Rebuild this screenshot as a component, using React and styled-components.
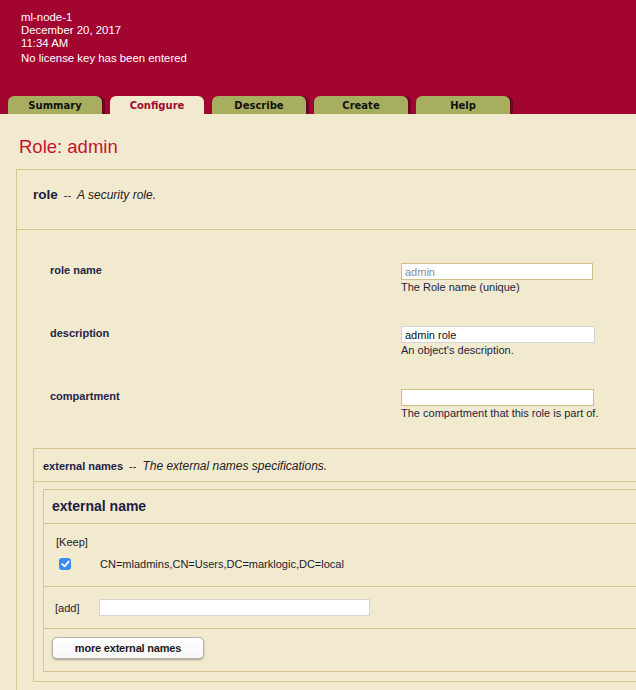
import styled, { createGlobalStyle } from 'styled-components';

const GlobalStyle = createGlobalStyle`
  body {
    margin: 0;
    background-color: #f2eacf;
    font-family: "Liberation Sans", Arial, sans-serif;
    overflow: hidden;
  }
`;

const tabs = ['Summary', 'Configure', 'Describe', 'Create', 'Help'];

const fields = [
  { label: 'role name', value: 'admin', help: 'The Role name (unique)', locked: true, width: 192 },
  { label: 'description', value: 'admin role', help: "An object's description.", grey: true, width: 194 },
  { label: 'compartment', value: '', help: 'The compartment that this role is part of.', width: 193 },
];

export default function App() {
  return (
    <>
      <GlobalStyle />
      <Header>
        <HostInfo>
          <div>ml-node-1</div>
          <div>December 20, 2017</div>
          <div>11:34 AM</div>
          <License>No license key has been entered</License>
        </HostInfo>
        <TabBar>
          {tabs.map((t) => (
            <Tab key={t} $active={t === 'Configure'}>
              {t}
            </Tab>
          ))}
        </TabBar>
      </Header>

      <Main>
        <Title>Role: admin</Title>
        <Box>
          <BoxHeader>
            <Strong>role</Strong>
            <Dash>--</Dash>
            <Desc>A security role.</Desc>
          </BoxHeader>

          <Fields>
            {fields.map((f) => (
              <FieldRow key={f.label}>
                <FieldLabel>{f.label}</FieldLabel>
                <div>
                  <TextInput
                    readOnly
                    value={f.value}
                    $locked={f.locked}
                    $grey={f.grey}
                    style={{ width: f.width }}
                  />
                  <Help>{f.help}</Help>
                </div>
              </FieldRow>
            ))}
          </Fields>

          <SubBox>
            <SubHeader>
              <SmallStrong>external names</SmallStrong>
              <Dash>--</Dash>
              <Desc>The external names specifications.</Desc>
            </SubHeader>

            <ItemBox>
              <ItemTitle>external name</ItemTitle>
              <KeepSection>
                <Plain>[Keep]</Plain>
                <KeepRow>
                  <Check>
                    <svg width="9" height="8" viewBox="0 0 9 8">
                      <path d="M1.2 4.2 L3.6 6.4 L7.8 1.4" fill="none" stroke="#fff" strokeWidth="1.8" strokeLinecap="round" strokeLinejoin="round" />
                    </svg>
                  </Check>
                  <Plain>CN=mladmins,CN=Users,DC=marklogic,DC=local</Plain>
                </KeepRow>
              </KeepSection>
              <AddRow>
                <AddLabel>[add]</AddLabel>
                <TextInput readOnly value="" $grey style={{ width: 271 }} />
              </AddRow>
              <ButtonRow>
                <MoreButton>more external names</MoreButton>
              </ButtonRow>
            </ItemBox>
          </SubBox>
        </Box>
      </Main>
    </>
  );
}

const Header = styled.header`
  background-color: #a10530;
  height: 114px;
  display: flex;
  flex-direction: column;
`;

const HostInfo = styled.div`
  padding: 11px 0 0 21px;
  color: #fff;
  font-size: 11.4px;
  line-height: 13px;
`;

const License = styled.div`
  margin-top: 2px;
`;

const TabBar = styled.nav`
  margin-top: auto;
  display: flex;
  gap: 8px;
  padding-left: 8px;
`;

const Tab = styled.div`
  width: 94px;
  height: 18px;
  line-height: 19px;
  text-align: center;
  border-radius: 6px 6px 0 0;
  background-color: ${(p) => (p.$active ? '#f2eacf' : '#a8ae5f')};
  color: ${(p) => (p.$active ? '#a10530' : '#111')};
  box-shadow: ${(p) => (p.$active ? 'none' : '3px 0 0 #6e0522')};
  font-family: "DejaVu Sans", Verdana, sans-serif;
  font-weight: bold;
  font-size: 10px;
`;

const Main = styled.main`
  padding-left: 16px;
`;

const Title = styled.h1`
  margin: 22px 0 11px 3px;
  font-size: 18.5px;
  line-height: 22px;
  font-weight: normal;
  color: #c41230;
`;

const Box = styled.section`
  border: 1px solid #d5c48b;
  border-right: none;
  padding-bottom: 20px;
`;

const BoxHeader = styled.div`
  height: 60px;
  box-sizing: border-box;
  padding: 16px 16px 0;
  line-height: 16px;
  border-bottom: 1px solid #d5c48b;
  color: #1c1c44;
`;

const Strong = styled.span`
  font-weight: bold;
  font-size: 13.5px;
`;

const SmallStrong = styled.span`
  font-weight: bold;
  font-size: 11px;
`;

const Dash = styled.span`
  font-size: 11px;
  margin: 0 6px;
`;

const Desc = styled.span`
  font-style: italic;
  font-size: 12px;
  color: #222;
`;

const Fields = styled.div`
  display: flex;
  flex-direction: column;
  gap: 32px;
  padding: 33px 0 0 33px;
`;

const FieldRow = styled.div`
  display: grid;
  grid-template-columns: 351px auto;
`;

const FieldLabel = styled.div`
  font-weight: bold;
  font-size: 11px;
  line-height: 14px;
  color: #24244a;
`;

const TextInput = styled.input`
  display: block;
  box-sizing: border-box;
  height: 17px;
  margin: 0;
  padding: 0 3px;
  border: 1px solid ${(p) => (p.$grey ? '#d4d4d4' : '#d1bf85')};
  background: #fff;
  font-family: inherit;
  font-size: 11px;
  color: ${(p) => (p.$locked ? '#8a8a9a' : '#111')};
  outline: none;
`;

const Help = styled.div`
  font-size: 11px;
  line-height: 14px;
  color: #1e1e3c;
`;

const SubBox = styled.div`
  margin: 28px 0 0 16px;
  border: 1px solid #d5c48b;
  border-right: none;
  padding-bottom: 9px;
`;

const SubHeader = styled.div`
  height: 32px;
  line-height: 32px;
  padding-left: 9px;
  border-bottom: 1px solid #d5c48b;
  color: #1c1c44;
`;

const ItemBox = styled.div`
  margin: 7px 0 0 9px;
  border: 1px solid #d5c48b;
  border-right: none;
`;

const ItemTitle = styled.div`
  height: 33px;
  line-height: 33px;
  padding-left: 8px;
  font-weight: bold;
  font-size: 14px;
  color: #1c1c44;
  border-bottom: 1px solid #d5c48b;
`;

const KeepSection = styled.div`
  padding: 11px 0 15px 12px;
  border-bottom: 1px solid #d5c48b;
`;

const Plain = styled.div`
  font-size: 11px;
  line-height: 14px;
  color: #1a1a2e;
`;

const KeepRow = styled.div`
  display: flex;
  align-items: center;
  margin-top: 8px;
  padding-left: 3px;
  gap: 29px;
`;

const Check = styled.span`
  width: 12px;
  height: 12px;
  border-radius: 3px;
  background-color: #3a8ef3;
  display: flex;
  align-items: center;
  justify-content: center;
`;

const AddRow = styled.div`
  display: flex;
  align-items: center;
  padding: 12px 0 12px 11px;
  border-bottom: 1px solid #d5c48b;
`;

const AddLabel = styled(Plain)`
  width: 44px;
`;

const ButtonRow = styled.div`
  padding: 8px 0 12px 8px;
`;

const MoreButton = styled.button`
  width: 152px;
  height: 22px;
  border: 1px solid #b5b5b5;
  border-radius: 5px;
  background: linear-gradient(#ffffff, #f7f7f7);
  box-shadow: 0 1px 2px rgba(0, 0, 0, 0.35);
  font-family: inherit;
  font-weight: bold;
  font-size: 11px;
  letter-spacing: -0.2px;
  color: #1a1a1a;
  padding: 0;
`;
